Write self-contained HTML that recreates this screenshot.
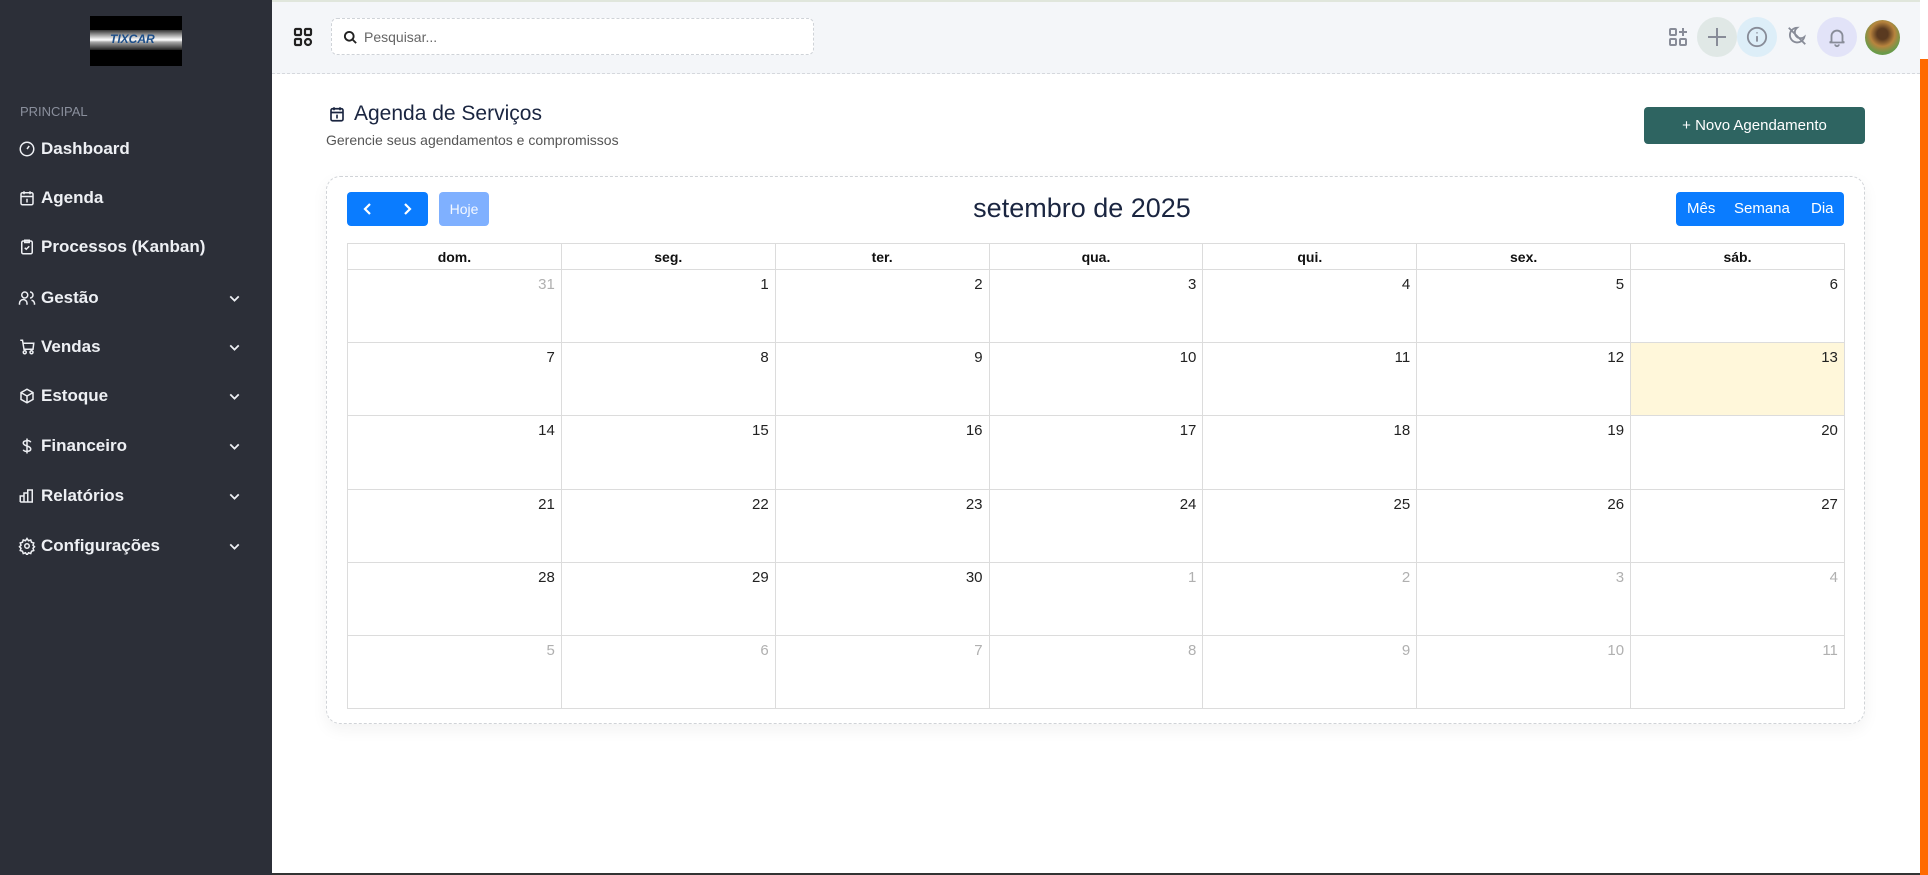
<!DOCTYPE html>
<html><head><meta charset="utf-8"><style>
*{box-sizing:border-box;margin:0;padding:0}
body{width:1928px;height:875px;overflow:hidden;background:#fff;font-family:"Liberation Sans",sans-serif;position:relative}
.sb{position:absolute;left:0;top:0;width:272px;height:875px;background:#2c2f38}
.logo{position:absolute;left:90px;top:16px;width:92px;height:50px;background:#000}
.logo .bar{position:absolute;left:0;top:14px;width:92px;height:20px;background:linear-gradient(#333,#ddd 40%,#fff 50%,#aaa 60%,#222)}
.logo span{position:absolute;left:20px;top:16px;font:italic bold 12px "Liberation Sans";color:#1d4f8a}
.sec{position:absolute;left:20px;top:104px;font-size:13px;color:#8a8f9c}
.nav{position:absolute;left:18px;color:#eef0f4;font-size:17px;font-weight:bold;display:flex;align-items:center;width:232px}
.nav svg{width:18px;height:18px;margin-right:5px;flex:none}
.nav .ch{position:absolute;right:2px;width:17px;height:17px}
.hdr{position:absolute;left:272px;top:0;width:1648px;height:74px;background:#f4f6f9;border-bottom:1px dashed #d5d8dd;border-top:2px solid #e0e6dc}
.search{position:absolute;left:331px;top:18px;width:483px;height:37px;border:1px dashed #cfd3d8;border-radius:6px;background:#fff;font-size:14px;color:#666;padding:10px 0 0 32px}
.ic{position:absolute;top:26px;width:40px;height:40px;border-radius:50%}
.main-title{position:absolute;left:354px;top:102px;font-size:21px;color:#1a2540}
.sub{position:absolute;left:326px;top:132px;font-size:14px;color:#555}
.btn{position:absolute;left:1644px;top:107px;width:221px;height:37px;background:#2e6461;border-radius:4px;color:#fff;font-size:15px;text-align:center;line-height:37px}
.card{position:absolute;left:326px;top:176px;width:1539px;height:548px;border:1px dashed #d0d3d7;border-radius:14px;box-shadow:0 6px 16px rgba(0,0,0,.05)}
.nb{position:absolute;top:192px;height:34px;background:#0a7cff;border-radius:4px;color:#fff}
.cal{position:absolute;left:347px;top:243px;border-collapse:collapse;table-layout:fixed;width:1497px}
.cal td,.cal th{border:1px solid #dcdcdc;width:213.85px}
.cal th{height:26px;font-size:14px;color:#111}
.cal td{height:73.2px;vertical-align:top;text-align:right;padding:6px 6px 0 0;font-size:15px;color:#222}
.cal td.o{color:#b0b0b0}
.cal td.t{background:#fff7da}
</style></head><body>
<div class="sb">
 <div class="logo"><div class="bar"></div><span>TIXCAR</span></div>
 <div class="sec">PRINCIPAL</div>
 <div class="nav" style="top:139px"><svg viewBox="0 0 24 24" fill="none" stroke="#eef0f4" stroke-width="2"><circle cx="12" cy="12" r="9"/><path d="M12 12l3-4"/></svg>Dashboard</div>
 <div class="nav" style="top:188px"><svg viewBox="0 0 24 24" fill="none" stroke="#eef0f4" stroke-width="2"><rect x="4" y="5" width="16" height="16" rx="2"/><path d="M4 10h16M8 3v4M16 3v4M11 14h1v4"/></svg>Agenda</div>
 <div class="nav" style="top:237px"><svg viewBox="0 0 24 24" fill="none" stroke="#eef0f4" stroke-width="2"><rect x="5" y="4" width="14" height="17" rx="2"/><path d="M9 3h6v3H9zM9 13l2 2 4-4"/></svg>Processos (Kanban)</div>
 <div class="nav" style="top:288px"><svg viewBox="0 0 24 24" fill="none" stroke="#eef0f4" stroke-width="2"><circle cx="9" cy="8" r="4"/><path d="M2 21v-2a5 5 0 0110 0v2M16 4a4 4 0 010 8M18 15a5 5 0 014 4v2"/></svg>Gestão<svg class="ch" viewBox="0 0 24 24" fill="none" stroke="#eef0f4" stroke-width="2.5"><path d="M6 9l6 6 6-6"/></svg></div>
 <div class="nav" style="top:337px"><svg viewBox="0 0 24 24" fill="none" stroke="#eef0f4" stroke-width="2"><path d="M3 3h3l2 12h12l1-8H7"/><circle cx="9" cy="19" r="2"/><circle cx="18" cy="19" r="2"/></svg>Vendas<svg class="ch" viewBox="0 0 24 24" fill="none" stroke="#eef0f4" stroke-width="2.5"><path d="M6 9l6 6 6-6"/></svg></div>
 <div class="nav" style="top:386px"><svg viewBox="0 0 24 24" fill="none" stroke="#eef0f4" stroke-width="2"><path d="M12 3l8 4.5v9L12 21l-8-4.5v-9zM12 12l8-4.5M12 12v9M12 12L4 7.5"/></svg>Estoque<svg class="ch" viewBox="0 0 24 24" fill="none" stroke="#eef0f4" stroke-width="2.5"><path d="M6 9l6 6 6-6"/></svg></div>
 <div class="nav" style="top:436px"><svg viewBox="0 0 24 24" fill="none" stroke="#eef0f4" stroke-width="2"><path d="M17 7a4 3 0 00-5-2c-3 0-5 1-5 3s2 3 5 4 5 2 5 4-2 3-5 3a4 3 0 01-5-2M12 2v20"/></svg>Financeiro<svg class="ch" viewBox="0 0 24 24" fill="none" stroke="#eef0f4" stroke-width="2.5"><path d="M6 9l6 6 6-6"/></svg></div>
 <div class="nav" style="top:486px"><svg viewBox="0 0 24 24" fill="none" stroke="#eef0f4" stroke-width="2"><path d="M3 20V12h5v8M8 20V8h5v12M13 20V4h6v16H3"/></svg>Relatórios<svg class="ch" viewBox="0 0 24 24" fill="none" stroke="#eef0f4" stroke-width="2.5"><path d="M6 9l6 6 6-6"/></svg></div>
 <div class="nav" style="top:536px"><svg viewBox="0 0 24 24" fill="none" stroke="#eef0f4" stroke-width="2"><circle cx="12" cy="12" r="3"/><path d="M12 2l2 3 3-1 1 3 3 1-1 3 2 2-2 2 1 3-3 1-1 3-3-1-2 3-2-3-3 1-1-3-3-1 1-3-2-2 2-2-1-3 3-1 1-3 3 1z"/></svg>Configurações<svg class="ch" viewBox="0 0 24 24" fill="none" stroke="#eef0f4" stroke-width="2.5"><path d="M6 9l6 6 6-6"/></svg></div>
</div>
<div class="hdr"></div>
<svg style="position:absolute;left:293px;top:27px" width="20" height="20" viewBox="0 0 20 20" fill="none" stroke="#222" stroke-width="2.2"><rect x="2" y="2" width="6" height="6" rx="1"/><rect x="12" y="2" width="6" height="6" rx="1"/><rect x="2" y="12" width="6" height="6" rx="1"/><circle cx="15" cy="15" r="3"/></svg>
<div class="search">Pesquisar...</div>
<svg style="position:absolute;left:343px;top:30px" width="15" height="15" viewBox="0 0 24 24" fill="none" stroke="#222" stroke-width="3"><circle cx="10" cy="10" r="7"/><path d="M15 15l6 6"/></svg>
<svg style="position:absolute;left:1668px;top:27px" width="20" height="20" viewBox="0 0 20 20" fill="none" stroke="#888c98" stroke-width="2"><rect x="2" y="2" width="6" height="6" rx="1"/><rect x="2" y="12" width="6" height="6" rx="1"/><rect x="12" y="12" width="6" height="6" rx="1"/><path d="M15 1v8M11 5h8"/></svg>
<div class="ic" style="left:1697px;top:17px;background:#e0e8e6"></div>
<svg style="position:absolute;left:1706px;top:26px" width="22" height="22" viewBox="0 0 22 22" stroke="#888c98" stroke-width="2"><path d="M11 2v18M2 11h18"/></svg>
<div class="ic" style="left:1737px;top:17px;background:#ddeef8"></div>
<svg style="position:absolute;left:1746px;top:26px" width="22" height="22" viewBox="0 0 24 24" fill="none" stroke="#888c98" stroke-width="2"><circle cx="12" cy="12" r="10"/><path d="M12 11v6M12 7v1"/></svg>
<svg style="position:absolute;left:1786px;top:25px" width="22" height="22" viewBox="0 0 24 24" fill="none" stroke="#888c98" stroke-width="2"><path d="M12 3a8 8 0 108 10 6 6 0 01-8-10zM3 3l18 18"/></svg>
<div class="ic" style="left:1817px;top:17px;background:#e2e3f8"></div>
<svg style="position:absolute;left:1826px;top:26px" width="22" height="22" viewBox="0 0 24 24" fill="none" stroke="#888c98" stroke-width="2"><path d="M6 17V11a6 6 0 0112 0v6l2 1H4zM10 20a2 2 0 004 0"/></svg>
<div style="position:absolute;left:1865px;top:20px;width:35px;height:35px;border-radius:50%;background:radial-gradient(circle at 50% 40%,#5a3a20 20%,#b8843e 45%,#6a9a4a 70%)"></div>
<div style="position:absolute;left:1920px;top:59px;width:8px;height:816px;background:#ff6a00"></div>
<div style="position:absolute;left:272px;top:873px;width:1648px;height:2px;background:#333"></div>
<svg style="position:absolute;left:328px;top:104px" width="18" height="20" viewBox="0 0 24 24" fill="none" stroke="#1a2540" stroke-width="2.2"><rect x="4" y="5" width="16" height="16" rx="2"/><path d="M4 10h16M8 3v4M16 3v4M11 14h1v4"/></svg>
<div class="main-title">Agenda de Serviços</div>
<div class="sub">Gerencie seus agendamentos e compromissos</div>
<div class="btn">+ Novo Agendamento</div>
<div class="card"></div>
<div class="nb" style="left:347px;width:81px"><svg width="81" height="34" viewBox="0 0 81 34" fill="none" stroke="#fff" stroke-width="2.2"><path d="M23 12l-5 5 5 5M58 12l5 5-5 5"/></svg></div>
<div class="nb" style="left:439px;width:50px;background:#7fb0ff;font-size:14px;text-align:center;line-height:34px;color:#f4f8ff">Hoje</div>
<div style="position:absolute;left:0;width:2164px;top:193px;text-align:center;font-size:27px;color:#1a2540">setembro de 2025</div>
<div class="nb" style="left:1676px;width:168px;font-size:15px;line-height:34px"><span style="position:absolute;left:11px">Mês</span><span style="position:absolute;left:58px">Semana</span><span style="position:absolute;left:135px">Dia</span></div>
<table class="cal">
<tr><th>dom.</th><th>seg.</th><th>ter.</th><th>qua.</th><th>qui.</th><th>sex.</th><th>sáb.</th></tr>
<tr><td class="o">31</td><td>1</td><td>2</td><td>3</td><td>4</td><td>5</td><td>6</td></tr>
<tr><td>7</td><td>8</td><td>9</td><td>10</td><td>11</td><td>12</td><td class="t">13</td></tr>
<tr><td>14</td><td>15</td><td>16</td><td>17</td><td>18</td><td>19</td><td>20</td></tr>
<tr><td>21</td><td>22</td><td>23</td><td>24</td><td>25</td><td>26</td><td>27</td></tr>
<tr><td>28</td><td>29</td><td>30</td><td class="o">1</td><td class="o">2</td><td class="o">3</td><td class="o">4</td></tr>
<tr><td class="o">5</td><td class="o">6</td><td class="o">7</td><td class="o">8</td><td class="o">9</td><td class="o">10</td><td class="o">11</td></tr>
</table>
</body></html>
